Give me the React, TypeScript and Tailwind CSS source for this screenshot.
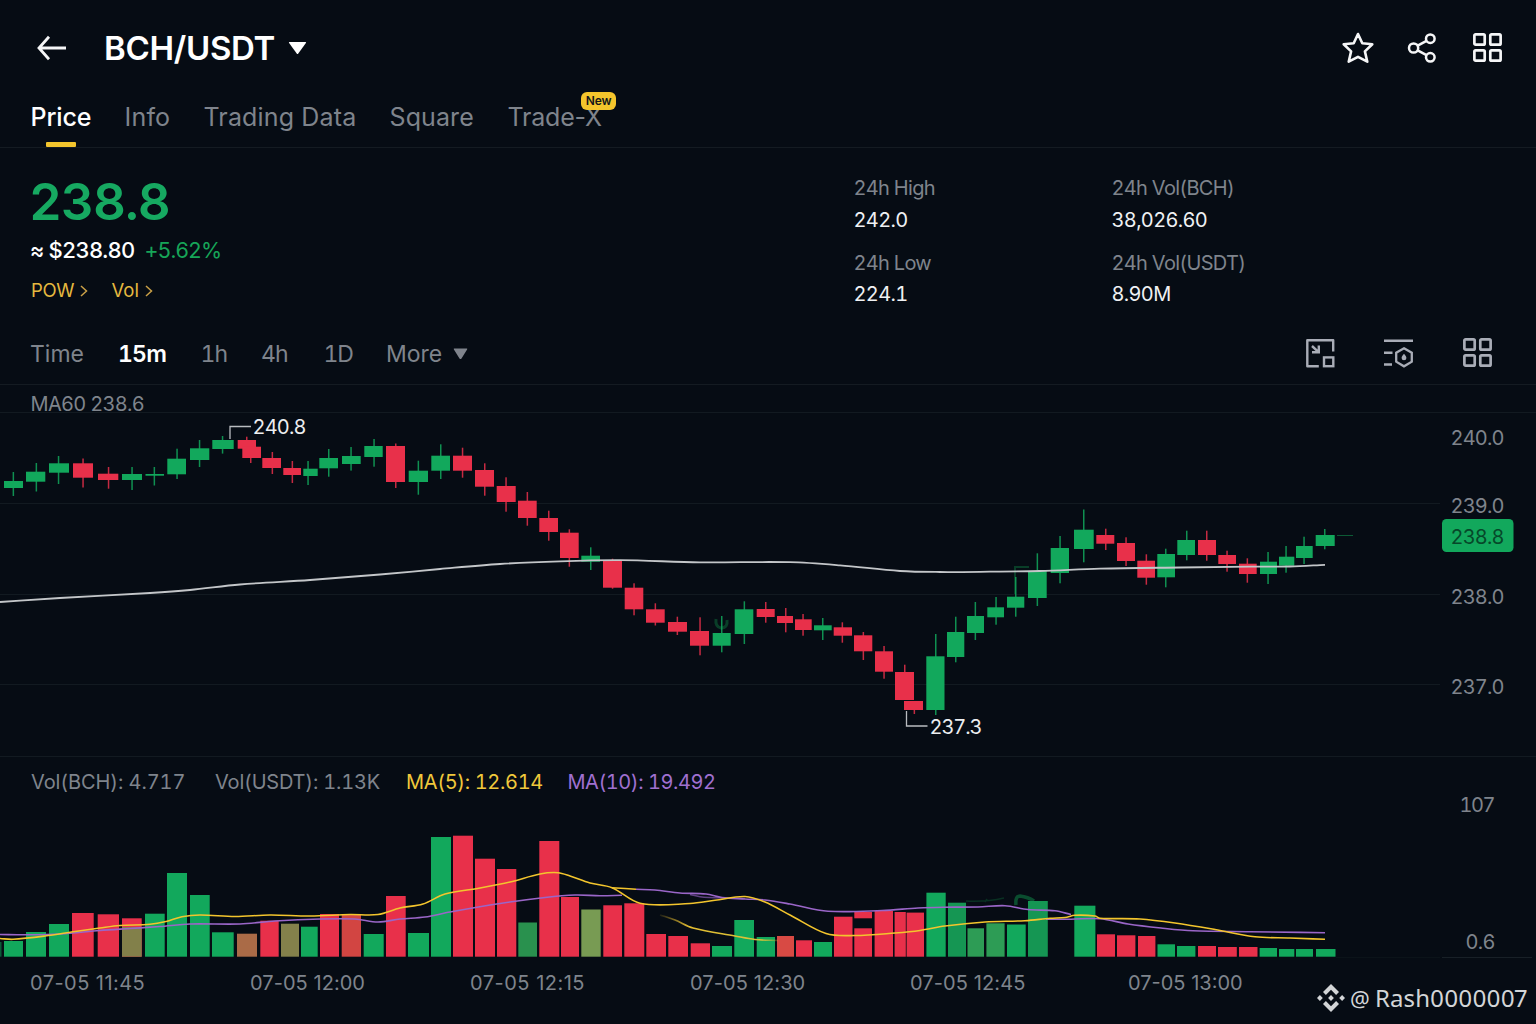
import React from "react";

const GREEN = "#12a85c";
const RED = "#e8304a";
const GRAY = "#7f848c";

type Kind = "g" | "r";
// left, right, body top, body bottom, wick x, wick top, wick bottom
type Candle = [Kind, number, number, number, number, number, number, number];

const candles: Candle[] = [
  ["g", 4, 23, 481, 488, 13.3, 472, 496],
  ["g", 26, 45.3, 471.7, 481.7, 36.3, 463, 491.5],
  ["g", 49, 69, 463.3, 472.7, 58.5, 456, 484],
  ["r", 73, 93, 463.3, 477.7, 83, 458.5, 487.5],
  ["r", 98, 118.3, 473.7, 480, 108.5, 467, 488.7],
  ["g", 122, 142, 474, 480, 132, 467, 490],
  ["g", 145.5, 164, 474, 475.7, 154.3, 467, 485.5],
  ["g", 167.3, 186, 458.7, 474.3, 177, 448.7, 479],
  ["g", 190, 209.3, 448.3, 460, 199.5, 440, 467],
  ["g", 212.3, 233.7, 440, 449, 222.5, 436, 453.6],
  ["r", 237.7, 256, 440, 448.7, 246.7, 436.7, 448],
  ["r", 242.3, 261, 446.7, 458, 250.7, 448, 463],
  ["r", 262.3, 281, 458, 468, 272.3, 452, 474],
  ["r", 283.3, 301, 468, 475, 292.3, 461, 483],
  ["g", 303.3, 317.7, 468.7, 476, 308, 461, 485],
  ["g", 319.3, 338, 458, 468.3, 328.7, 449, 476.7],
  ["g", 342, 360.7, 456, 464, 351, 447, 470.6],
  ["g", 364.3, 382.7, 446, 457, 374, 439, 466.7],
  ["r", 386, 405, 446, 482, 395.7, 443.5, 488],
  ["g", 408.7, 428, 470.7, 482, 418.3, 460.7, 494.7],
  ["g", 431.3, 450, 455.7, 470.7, 440.7, 444.3, 479],
  ["r", 453, 472, 455.7, 470.7, 462.5, 447.7, 477.7],
  ["r", 475, 494, 470, 486.7, 484.7, 463.3, 495.7],
  ["r", 496.7, 515.7, 486, 502, 506, 477.3, 511.7],
  ["r", 518, 536.7, 500.7, 518, 527.3, 492, 525.7],
  ["r", 539.3, 558, 518, 532, 548.7, 510.7, 540.7],
  ["r", 560, 578.7, 532.7, 558, 569.3, 529.3, 566.7],
  ["g", 581.3, 600, 555.7, 561.7, 590.7, 547.3, 570],
  ["r", 603, 622, 560, 587.7, 612.5, 558.7, 588.7],
  ["r", 624.7, 643.3, 587.7, 609.3, 634, 583.3, 615.3],
  ["r", 646, 664.7, 609.3, 622.7, 655.3, 603.3, 625.5],
  ["r", 668, 687, 622, 631.7, 677.3, 616.7, 635],
  ["r", 690, 709, 631, 645.7, 700, 617.3, 655.3],
  ["g", 712.7, 730.7, 633, 645.7, 721.7, 616, 652.3],
  ["g", 734.7, 753.3, 609.3, 634, 744.3, 601.3, 644],
  ["r", 756.7, 774.7, 609, 617, 765.7, 602, 622.7],
  ["r", 777, 793, 616, 623, 785.7, 608, 632.3],
  ["r", 795, 811.7, 619.3, 630, 803, 614, 635.7],
  ["g", 814, 831.7, 625.3, 630.3, 822.7, 618, 640],
  ["r", 833.7, 852, 627.3, 635.7, 842.3, 622.3, 642.7],
  ["r", 854, 872.3, 635.3, 651.3, 863.3, 632, 660],
  ["r", 875, 893, 651.3, 671.7, 884, 646, 678.7],
  ["r", 895, 914, 672, 700, 904.7, 664.7, 700],
  ["r", 904, 923, 701, 710, 914.3, 701, 714],
  ["g", 926.3, 944.5, 656.3, 710, 935.7, 634, 715],
  ["g", 947, 964.3, 632, 657, 955.7, 616.7, 662.3],
  ["g", 967, 984, 616, 633, 975.3, 602, 640],
  ["g", 987.3, 1004, 607.3, 617.3, 996, 597, 624.7],
  ["g", 1007, 1024.3, 596.7, 607.7, 1015.7, 577, 616.7],
  ["g", 1028, 1046.7, 571, 598, 1037.3, 553.3, 606],
  ["g", 1050.7, 1069, 548, 573, 1060, 536, 583.3],
  ["g", 1074, 1093.7, 529.7, 549, 1083.7, 509.5, 562.3],
  ["r", 1096.3, 1114.3, 535, 543.7, 1105.7, 528.7, 550],
  ["r", 1117, 1135, 543, 561, 1126, 537.3, 566],
  ["r", 1137.3, 1155, 560.7, 577.7, 1146.3, 554.3, 584.7],
  ["g", 1157.3, 1175, 554, 577.3, 1165.7, 548.7, 587.3],
  ["g", 1177.3, 1195, 540, 555, 1186.7, 530.7, 560.3],
  ["r", 1198, 1216, 540, 555, 1206.7, 530.7, 560.7],
  ["r", 1218.3, 1236, 555, 564, 1227, 550.7, 571.7],
  ["r", 1239, 1256.7, 563.7, 574, 1247.3, 558.3, 582.7],
  ["g", 1260, 1277, 561.7, 574, 1268, 552, 584],
  ["g", 1279, 1294.3, 556.7, 565.7, 1286, 546, 572.7],
  ["g", 1296, 1312.7, 546, 558, 1304, 536.7, 564],
  ["g", 1315.7, 1334.7, 535, 546, 1324.7, 529, 549.3],
];

// left, right, top, fill
type Bar = [number, number, number, string];
const bars: Bar[] = [
  [4, 23, 941, GREEN],
  [26, 46, 932, GREEN],
  [49, 69, 924, GREEN],
  [72, 93.7, 913, RED],
  [97.7, 119, 914.3, RED],
  [122, 141.7, 918.3, RED],
  [122, 141.7, 927, "#82804a"],
  [145, 164.7, 913.7, GREEN],
  [167, 187, 873, GREEN],
  [190, 209.7, 895, GREEN],
  [212, 233.7, 932.3, GREEN],
  [237, 257, 933.7, "#aa6b47"],
  [260.3, 278.7, 920.7, RED],
  [281, 299, 923.7, "#84814b"],
  [301, 317.7, 926.7, GREEN],
  [320, 339, 914, RED],
  [341.7, 361, 914, "#d24542"],
  [363.7, 383.7, 934, GREEN],
  [386, 405.7, 896, RED],
  [408, 429, 933, GREEN],
  [431, 451, 837, GREEN],
  [453, 473, 835.7, RED],
  [475, 495, 858.7, RED],
  [497, 516.3, 869, RED],
  [518.3, 537, 922.5, "#29914e"],
  [539.3, 559.3, 841, RED],
  [561, 579, 897, RED],
  [581.3, 600.7, 909.5, "#789b53"],
  [603.3, 622, 905.3, RED],
  [624.3, 644.3, 903.3, RED],
  [646.3, 666, 934, RED],
  [668.3, 688, 936, RED],
  [690.7, 710, 943.3, RED],
  [712, 732, 946, GREEN],
  [734.3, 754, 920, GREEN],
  [756.7, 775, 937, GREEN],
  [777, 794, 936, "#d84a44"],
  [796, 812, 940.3, RED],
  [814, 832, 942, GREEN],
  [834, 852.5, 916.7, RED],
  [854.3, 872, 928.3, RED],
  [874.6, 893, 911, RED],
  [894.6, 905.8, 912, RED],
  [906.6, 924, 912.6, RED],
  [926.4, 945.7, 892.7, GREEN],
  [948, 966, 902.7, "#159653"],
  [967.5, 984, 928.3, "#2d9c55"],
  [986.4, 1004.6, 923.3, "#2d9c55"],
  [1007, 1025.7, 924.5, GREEN],
  [1028, 1047.8, 901, "#159653"],
  [1074.3, 1095.4, 905.7, GREEN],
  [1097, 1115, 934.3, RED],
  [1117, 1135.4, 935.3, RED],
  [1138, 1155.4, 936, RED],
  [1157.5, 1175, 944.3, GREEN],
  [1177, 1195.4, 946, GREEN],
  [1198, 1216, 946, RED],
  [1218, 1236.8, 947, RED],
  [1239, 1257.5, 947, RED],
  [1259.6, 1277, 948, GREEN],
  [1279, 1294.3, 949, GREEN],
  [1296, 1313, 949, GREEN],
  [1316, 1335.5, 949, GREEN],
];

type Pt = [number, number];

const ma60: Pt[] = [[0, 602], [60, 598], [150, 593], [190, 590], [240, 584.5], [310, 580], [380, 574.5], [440, 569], [500, 564], [560, 561.3], [620, 560.2], [700, 562.3], [790, 562.2], [840, 565.3], [900, 571], [940, 572], [990, 571.7], [1040, 571], [1100, 568.7], [1180, 567.5], [1250, 566.7], [1290, 566.5], [1325, 564.8]];
const ma5: Pt[] = [[0, 938.5], [13, 939.3], [45, 936], [75, 931.5], [100, 928], [120, 925.5], [150, 924.3], [166, 921.5], [182, 916.7], [200, 915], [235, 916.5], [270, 915], [310, 916], [350, 914.5], [378, 914.5], [400, 908], [423, 904], [445, 894], [480, 888], [510, 882], [540, 874], [558, 872.7], [570, 876], [590, 883], [612, 887.7], [640, 903.3], [690, 903.5], [715, 900.3], [745, 896.5], [765, 902], [790, 915], [826, 933.5], [855, 935.5], [895, 933], [920, 930.5], [945, 926], [985, 922], [1025, 920.7], [1050, 918.3], [1065, 917.5], [1075, 915.3], [1095, 916], [1100, 918.2], [1140, 919], [1175, 923], [1215, 929.5], [1255, 936.8], [1290, 938], [1325, 939.3]];
const ma5Upper: Pt[] = [[612, 887.7], [625, 888.5], [636, 889.3]];
const ma5Lower: Pt[] = [[660, 915], [675, 920], [693, 928], [735, 936], [755, 939.5], [778, 940.5]];
const ma10: Pt[] = [[0, 934.5], [26, 934.8], [60, 934], [100, 930.5], [130, 928.5], [160, 926.5], [190, 924], [240, 924], [275, 921], [320, 919], [355, 919], [378, 922], [400, 919], [425, 917], [450, 912], [500, 903.5], [545, 897.5], [575, 895], [600, 895.7], [622, 895.3]];
const ma10Mid: Pt[] = [[636, 889.3], [655, 890], [680, 893], [706, 894], [722, 897.5], [745, 899], [765, 900], [790, 904], [828, 911.2], [882, 910.5], [918, 908], [943, 907.2], [978, 907], [1005, 905.7], [1028, 909.5], [1055, 910.8], [1071, 914.5]];
const ma10Spur: Pt[] = [[690, 894.5], [704, 897.3], [745, 898.5]];
const ma10End: Pt[] = [[1046, 919.2], [1071, 919.2], [1100, 918.7], [1128, 924], [1161, 928], [1193, 930.8], [1250, 931.7], [1325, 932.7]];

// Catmull-Rom spline through the points
function curve(p: Pt[]): string {
  let d = `M${p[0][0]} ${p[0][1]}`;
  for (let i = 0; i < p.length - 1; i++) {
    const a = p[Math.max(0, i - 1)];
    const b = p[i];
    const c = p[i + 1];
    const e = p[Math.min(p.length - 1, i + 2)];
    const dx = (c[0] - b[0]) / 3;
    const s1 = (c[1] - a[1]) / (c[0] - a[0]);
    const s2 = (e[1] - b[1]) / (e[0] - b[0]);
    d += `C${b[0] + dx} ${b[1] + s1 * dx} ${c[0] - dx} ${c[1] - s2 * dx} ${c[0]} ${c[1]}`;
  }
  return d;
}

function Label({ x, y, w, fill = GRAY, children }: { x: number; y: number; w: number; fill?: string; children: string }) {
  return (
    <text x={x} y={y} textLength={w} fill={fill} fontSize={20}>
      {children}
    </text>
  );
}

function PriceChart() {
  return (
    <svg className="block h-[372px] w-full overflow-visible" viewBox="0 385 1536 372">
      <g stroke="#121a21" strokeWidth={1}>
        <path d="M0 412.5H1536M0 503.5H1440M0 594.5H1440M0 684.5H1440M0 756.5H1536" />
      </g>
      <Label x={30.6} y={411} w={114}>MA60 238.6</Label>
      <path d="M1015 594V567h14" fill="none" stroke="#0b5431" strokeWidth={2} opacity={0.7} />
      <path d="M716 619q-1 8 5 9q7 0 6-8" fill="none" stroke="#0b5431" strokeWidth={3} opacity={0.7} />
      {candles.map(([k, l, r, t, b, x, wt, wb], i) => (
        <g key={i} fill={k === "g" ? GREEN : RED}>
          <rect x={x - 0.7} y={wt} width={1.5} height={wb - wt} opacity={0.85} />
          <rect x={l} y={t} width={r - l} height={b - t} />
        </g>
      ))}
      <path d={curve(ma60)} fill="none" stroke="#c3c6c9" strokeWidth={1.8} />
      <path d="M1337 535.5H1353" stroke="#0c5a35" />
      <path d="M230 439V426.5H251" fill="none" stroke="#b9bcc0" strokeWidth={1.3} />
      <Label x={252.5} y={434} w={54} fill="#eceef0">240.8</Label>
      <path d="M906.5 711V726H927.5" fill="none" stroke="#b9bcc0" strokeWidth={1.3} />
      <Label x={929.5} y={734} w={53} fill="#eceef0">237.3</Label>
      <Label x={1450.5} y={444.5} w={54}>240.0</Label>
      <Label x={1450.5} y={513} w={54}>239.0</Label>
      <rect x={1442} y={519} width={71.5} height={33} rx={4.5} fill={GREEN} />
      <Label x={1450.5} y={543.5} w={54} fill="#06482a">238.8</Label>
      <Label x={1450.5} y={604} w={54}>238.0</Label>
      <Label x={1450.5} y={694} w={54}>237.0</Label>
    </svg>
  );
}

function VolumeChart() {
  return (
    <svg className="block h-[159px] w-full overflow-visible" viewBox="0 799 1536 159">
      <defs>
        <linearGradient id="fade" x1="0" x2="1">
          <stop offset="0" stopColor="#f3c52d" stopOpacity="0.1" />
          <stop offset="0.25" stopColor="#e3bd32" />
          <stop offset="0.85" stopColor="#d9c337" />
          <stop offset="1" stopColor="#e3bd32" stopOpacity="0.2" />
        </linearGradient>
      </defs>
      <path d="M1336 957.5H1440" stroke="#0b1319" />
      <path d="M1442 957.5H1532" stroke="#182027" />
      <path d="M966 901q20 1 38-3M985 902l2-3" fill="none" stroke="#0b4a2c" strokeWidth={1.5} opacity={0.6} />
      <path d="M1016 905q-1-9 4-9q8 1 14 5" fill="none" stroke="#0d6a3b" strokeWidth={3.5} opacity={0.7} />
      {bars.map(([l, r, t, fill], i) => (
        <rect key={i} x={l} y={t} width={r - l} height={956.7 - t} fill={fill} />
      ))}
      <rect x={0} y={942} width={1.5} height={14.7} fill={GREEN} opacity={0.5} />
      <rect x={854.3} y={912} width={17.7} height={6.3} fill={RED} />
      <g fill="none" strokeWidth={1.6} strokeLinejoin="round">
        <g stroke="#9a66c8">
          <path d={curve(ma10)} />
          <path d={curve(ma10Mid)} />
          <path d={curve(ma10Spur)} opacity={0.6} />
          <path d={curve(ma10End)} />
        </g>
        <g stroke="#f3c52d">
          <path d={curve(ma5)} />
          <path d={curve(ma5Upper)} />
          <path d={curve(ma5Lower)} stroke="url(#fade)" />
        </g>
      </g>
      <Label x={1459.5} y={812} w={36}>107</Label>
      <Label x={1465.5} y={948.5} w={30}>0.6</Label>
    </svg>
  );
}

function GridIcon({ className }: { className: string }) {
  return (
    <svg className={className} viewBox="0 0 30 30" fill="none" stroke="currentColor" strokeWidth={2.6}>
      <rect x="2.3" y="2.3" width="10" height="10" rx="1.2" />
      <rect x="17.7" y="2.3" width="10" height="10" rx="1.2" />
      <rect x="2.3" y="17.7" width="10" height="10" rx="1.2" />
      <rect x="17.7" y="17.7" width="10" height="10" rx="1.2" />
    </svg>
  );
}

function Chevron() {
  return (
    <svg className="h-[12px] w-[8px]" viewBox="0 0 8 12" fill="none" stroke="#c9a047" strokeWidth={1.5}>
      <path d="M1 1l5.500 5-5.500 5" />
    </svg>
  );
}

function Stat({ label, value }: { label: string; value: string }) {
  return (
    <div className="flex h-[74.5px] flex-col">
      <span className="h-[31.5px] text-[20px] leading-[24px] tracking-[-0.7px] text-[#7f848c]">{label}</span>
      <span className="text-[20px] leading-[24px] tracking-[-0.65px] text-[#eff1f3]">{value}</span>
    </div>
  );
}

export default function App() {
  return (
    <div className="flex h-[1024px] w-[1536px] flex-col overflow-hidden whitespace-nowrap bg-[#060c14] font-['Inter',sans-serif] tabular-nums text-[#7f848c]">
      <header className="flex h-[96px] items-center pl-[36px] pr-[33px]">
        <svg className="h-[28px] w-[32px]" viewBox="0 0 32 28" fill="none" stroke="#f5f6f7" strokeWidth={2.8}>
          <path d="M13 2.800L3 14L13 25.200M3 14H30" />
        </svg>
        <h1 className="ml-[36px] w-[173px] text-[33px] font-semibold leading-[40px] tracking-[-0.3px] text-white">BCH/USDT</h1>
        <svg className="ml-[11px] h-[14px] w-[19px]" viewBox="0 0 19 14" fill="#fff">
          <path d="M1.5 1h16q1 0 .4 1L10.3 12.400q-.8 1-1.600 0L1.100 2q-.6-1 .4-1z" />
        </svg>
        <div className="ml-auto flex items-center pb-px text-[#f5f6f7]">
          <svg className="h-[34px] w-[34px]" viewBox="0 0 34 34" fill="none" stroke="currentColor" strokeWidth={2.6} strokeLinejoin="round">
            <path d="M17 3L21.300 12.300L31.300 13.200L23.900 20.400L26.300 30.700L17 25.800L7.700 30.700L10.100 20.400L2.700 13.200L12.700 12.300Z" />
          </svg>
          <svg className="ml-[32px] h-[32px] w-[30px]" viewBox="0 0 30 32" fill="none" stroke="currentColor" strokeWidth={2.5}>
            <circle cx="6.600" cy="16" r="4.600" />
            <circle cx="23.300" cy="6.700" r="4.300" />
            <circle cx="23.300" cy="25.300" r="4.300" />
            <path d="M10.700 13.700L19.500 8.800M10.700 18.300L19.500 23.200" />
          </svg>
          <GridIcon className="ml-[35px] h-[31px] w-[31px]" />
        </div>
      </header>

      <nav className="flex h-[52px] border-b border-[#141b22] pl-[30.5px] text-[25px] leading-[30px] proportional-nums">
        <div className="flex w-[94px] flex-col pt-[6px]">
          <span className="font-medium tracking-[-0.1px] text-white">Price</span>
          <span className="ml-[15.500px] mt-[10px] h-[5px] w-[30px] rounded-[1px] bg-[#f3c52d]" />
        </div>
        <span className="w-[79px] pt-[6px] tracking-[0.2px]">Info</span>
        <span className="w-[186px] pt-[6px] tracking-[0.15px]">Trading Data</span>
        <span className="w-[118px] pt-[6px] tracking-[0.1px]">Square</span>
        <div className="relative pt-[6px] tracking-[-0.2px]">
          Trade-X
          <span className="absolute left-[73.500px] top-[-4px] flex h-[17.500px] w-[35px] items-center justify-center rounded-[6px] bg-[#f5c52c] text-[12px] font-semibold leading-none text-[#14161a]">New</span>
        </div>
      </nav>

      <section className="flex h-[176px]">
        <div className="w-[853.5px] pl-[30px]">
          <div className="-ml-px mt-[23px] h-[62px] text-[51px] font-semibold leading-[62px] tracking-[-1px] text-[#16a961]">238.8</div>
          <div className="flex h-[34px] items-center text-[22px]">
            <span className="w-[114.500px] font-medium tracking-[-0.8px] text-white">≈ $238.80</span>
            <span className="text-[21.500px] tracking-[-1px] text-[#16a558]">+5.62%</span>
          </div>
          <div className="mt-[7px] flex h-[34px] items-center text-[18.500px] text-[#e5b93f]">
            <span className="w-[49.500px] pl-[1px] tracking-[-0.3px]">POW</span>
            <Chevron />
            <span className="ml-[24px] w-[33px]">Vol</span>
            <Chevron />
          </div>
        </div>
        <div className="w-[258px] pt-[28px]">
          <Stat label="24h High" value="242.0" />
          <Stat label="24h Low" value="224.1" />
        </div>
        <div className="pt-[28px]">
          <Stat label="24h Vol(BCH)" value="38,026.60" />
          <Stat label="24h Vol(USDT)" value="8.90M" />
        </div>
      </section>

      <div className="flex h-[61px] items-center border-b border-[#141b22] pl-[30px] pr-[43px] text-[23px]">
        <span className="w-[88px]">Time</span>
        <span className="w-[82.500px] font-semibold tracking-[-0.800px] text-white">15m</span>
        <span className="w-[60.500px] tracking-[-0.800px]">1h</span>
        <span className="w-[62.500px] tracking-[-0.800px]">4h</span>
        <span className="w-[62.500px] tracking-[-1.200px]">1D</span>
        <span className="w-[66.500px]">More</span>
        <svg className="h-[12px] w-[15px]" viewBox="0 0 15 12" fill="currentColor">
          <path d="M1.300 .5h12.400q1 0 .4 1L8.500 10.500q-1 1-2 0L.900 1.500q-.6-1 .4-1z" />
        </svg>
        <div className="ml-auto flex items-center pb-[3px] text-[#a9adb7]">
          <svg className="h-[32px] w-[32px]" viewBox="0 0 32 32" fill="none" stroke="currentColor" strokeWidth={2.400}>
            <path d="M28.200 14.500V3.300H2.300V29.200H13.800" strokeLinejoin="round" />
            <rect x="19" y="20.400" width="9.300" height="8.800" />
            <path d="M7 9L13.300 14.800M13.800 8.500V15.300H7" />
          </svg>
          <svg className="ml-[46px] h-[32px] w-[32px]" viewBox="0 0 32 32" fill="none" stroke="currentColor" strokeWidth={2.600}>
            <path d="M1 3.800H30M1 15.800H9.500M1 27.500H9" />
            <path d="M21 11.300L28.800 15.700V24.700L21 29.300L13.200 24.700V15.700Z" strokeWidth="2.300" />
            <path d="M21 16.700C22.500 18.500 23.400 19.700 23.400 20.900A2.400 2.400 0 0 1 18.600 20.900C18.600 19.700 19.500 18.500 21 16.700Z" fill="currentColor" stroke="none" />
          </svg>
          <GridIcon className="ml-[47px] h-[31px] w-[31px]" />
        </div>
      </div>

      <PriceChart />

      <div className="flex h-[42px] items-center pl-[31px] pt-[8px] text-[20px]">
        <span className="w-[184px] tracking-[-0.1px]">Vol(BCH): 4.717</span>
        <span className="w-[191px] tracking-[-0.2px]">Vol(USDT): 1.13K</span>
        <span className="w-[161.500px] tracking-[-0.35px] text-[#f0c83b]">MA(5): 12.614</span>
        <span className="tracking-[-0.45px] text-[#a070d0]">MA(10): 19.492</span>
      </div>

      <VolumeChart />

      <footer className="relative flex h-[66px] pl-[30px] pt-[11.500px] text-[20px] leading-[26px] proportional-nums">
        <span className="w-[220px] tracking-[0.45px]">07-05 11:45</span>
        <span className="w-[220px] tracking-[0.05px]">07-05 12:00</span>
        <span className="w-[220px] tracking-[0.5px]">07-05 12:15</span>
        <span className="w-[220px] tracking-[0.1px]">07-05 12:30</span>
        <span className="w-[218px] tracking-[0.1px]">07-05 12:45</span>
        <span>07-05 13:00</span>
        <div className="absolute left-[1317px] top-[24px] flex h-[32px] items-center font-['Noto_Sans',sans-serif] text-[24px] tracking-normal text-[#d3d5d7]">
          <svg className="h-[28px] w-[28px]" viewBox="0 0 28 28" fill="currentColor">
            <path d="M14 0l8 8-2.900 2.900L14 5.800l-5.100 5.100L6 8zM14 28l8-8-2.900-2.900L14 22.200l-5.100-5.100L6 20zM14 11.100l2.900 2.900L14 16.900 11.100 14zM2.900 11.100L5.800 14l-2.900 2.900L0 14zM25.100 11.100L28 14l-2.900 2.900L22.200 14z" />
          </svg>
          <span className="ml-[5px] w-[25px] text-[22px]">@</span>
          <span className="tracking-[0.1px]">Rash0000007</span>
        </div>
      </footer>
    </div>
  );
}
